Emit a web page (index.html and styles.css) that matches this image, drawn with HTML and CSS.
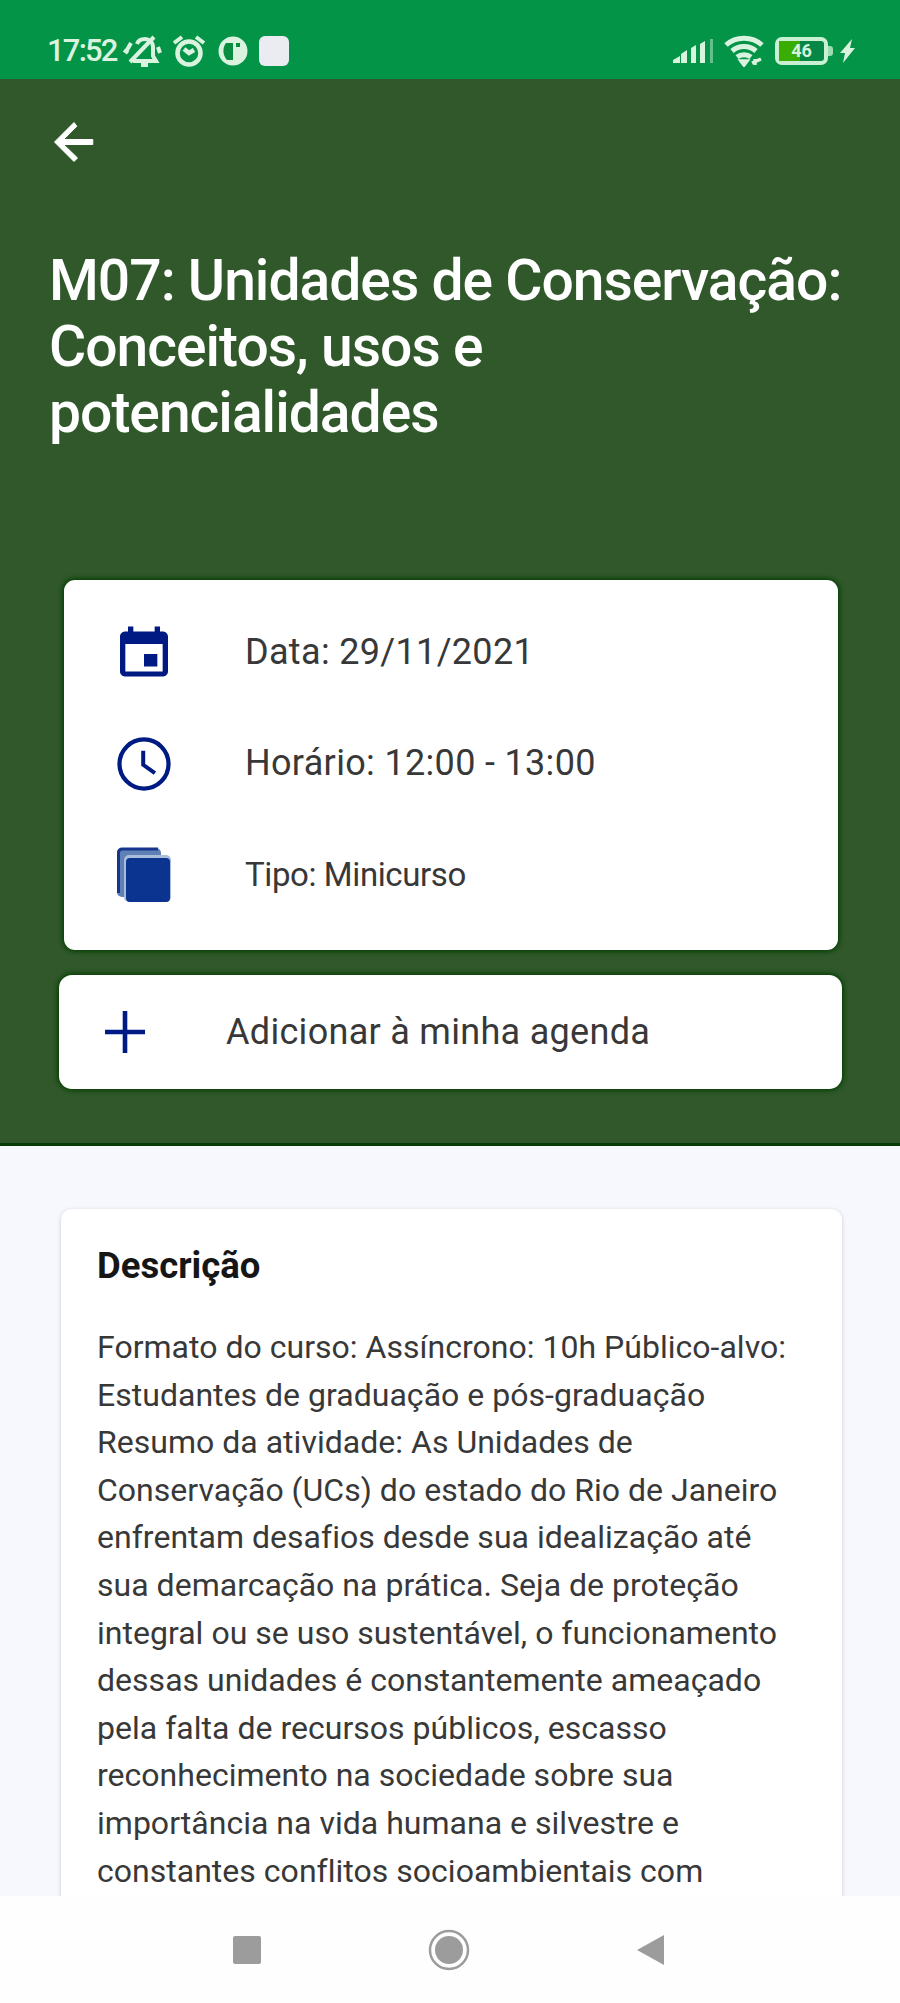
FILE: index.html
```html
<!DOCTYPE html>
<html lang="pt-BR">
<head>
  <meta charset="UTF-8">
  <meta name="viewport" content="width=device-width, initial-scale=1.0">
  <title>M07: Unidades de Conservação</title>
  <link rel="stylesheet" href="styles.css">
</head>
<body>
  <div class="status-bar">
    <span class="time">17:52</span>
    <svg class="bell" width="40" height="34" viewBox="0 0 40 34" fill="none" stroke="currentColor" stroke-width="4">
      <path d="M11 27h23l-3-5v-9c0-5-4-8-8-8-4 0-7 2-8 5M32 3L8 28M2 16l4 3M9 9l-4 7M36 13l2 6"/>
      <path d="M19 31h7"/>
    </svg>
    <svg class="alarm" width="34" height="32" viewBox="0 0 34 32" fill="none" stroke="currentColor">
      <circle cx="17" cy="18" r="11.5" stroke-width="4.500"/>
      <path d="M2 8l8-6M32 8l-8-6" stroke-width="4"/>
      <path d="M12 14l5 4 5-3" stroke-width="4.500"/>
    </svg>
    <svg class="disc" width="30" height="30" viewBox="0 0 30 30">
      <circle cx="15" cy="15" r="14.500" fill="currentColor"/>
      <path d="M8 7h7v17H9C5 20 4 12 8 7zM18 7h4v4h-4z" fill="#078c40"/>
    </svg>
    <span class="app-dot"></span>
    <svg class="signal" width="42" height="26" viewBox="0 0 42 26" fill="currentColor">
      <path d="M1 25v-3l7-4v7zM9 25V16l6-4v13zM19 25V10l5-3v18zM28 25V6l5-3v22z"/>
      <path d="M38 1h3v24h-3z" opacity=".45"/>
    </svg>
    <svg class="wifi" width="40" height="32" viewBox="0 0 40 32" fill="none" stroke="currentColor" stroke-width="5">
      <path d="M2 10C12 1 28 1 38 10M8 16c7-6 17-6 24 0M13 22c4-3 10-3 14 0"/>
      <path d="M17 26h6l-3 4zM28 28l9-4M31 24v6" stroke-width="3.500" fill="currentColor"/>
    </svg>
    <div class="battery"><div class="charge"></div><span>46</span></div>
    <svg class="bolt" width="16" height="24" viewBox="0 0 16 24" fill="currentColor">
      <path d="M12 0L0 14h5L3 24 15 9h-5z"/>
    </svg>
  </div>

  <header class="header">
    <svg class="back" width="60" height="60" viewBox="0 0 24 24" fill="#fff" stroke="#fff" stroke-width=".4">
      <path d="M19.500 11H7.830l5.300-5.300L12 4.200l-7.800 7.800 7.800 7.800 1.410-1.410L7.830 13H19.500v-2z"/>
    </svg>
    <h1>M07: Unidades de Conservação: Conceitos, usos e potencialidades</h1>

    <div class="info-card">
      <div class="info-row">
        <svg class="calendar" width="64" height="60" viewBox="0 0 24 24" preserveAspectRatio="none" fill="#001a83">
          <path d="M17 12h-5v5h5v-5zM16 1v2H8V1H6v2H5c-1.110 0-1.990.9-1.990 2L3 19c0 1.100.89 2 2 2h14c1.100 0 2-.9 2-2V5c0-1.100-.9-2-2-2h-1V1h-2zm3 18H5V8h14v11z"/>
        </svg>
        <span class="date">Data: 29/11/2021</span>
      </div>
      <div class="info-row">
        <svg width="64" height="64" viewBox="0 0 24 24" fill="none" stroke="#001a83">
          <circle cx="12" cy="12" r="9.200" stroke-width="1.600"/>
          <path d="M11.700 7v5.300l4.400 3.100" stroke-width="1.500"/>
        </svg>
        <span class="hour">Horário: 12:00 - 13:00</span>
      </div>
      <div class="info-row">
        <svg width="64" height="64" viewBox="0 0 64 64">
          <rect x="5" y="5" width="44" height="49" rx="5" fill="#5f80b5"/>
          <path d="M6.500 50V10q0-4 4-4H46" fill="none" stroke="#17358d" stroke-width="3"/>
          <rect x="12" y="12" width="47" height="47" rx="5" fill="#a9bddb"/>
          <rect x="14" y="15" width="44" height="44" rx="4" fill="#0a3490"/>
        </svg>
        <span class="kind">Tipo: Minicurso</span>
      </div>
    </div>

    <div class="add-card">
      <svg width="42" height="42" viewBox="0 0 42 42" stroke="#001a83" stroke-width="4.600">
        <path d="M1 21h40M21 0v42"/>
      </svg>
      <span>Adicionar à minha agenda</span>
    </div>
  </header>

  <main class="content">
    <section class="description">
      <h2>Descrição</h2>
      <p>Formato do curso: Assíncrono: 10h Público-alvo:<br>
        Estudantes de graduação e pós-graduação<br>
        Resumo da atividade: As Unidades de<br>
        Conservação (UCs) do estado do Rio de Janeiro<br>
        enfrentam desafios desde sua idealização até<br>
        sua demarcação na prática. Seja de proteção<br>
        integral ou se uso sustentável, o funcionamento<br>
        dessas unidades é constantemente ameaçado<br>
        pela falta de recursos públicos, escasso<br>
        reconhecimento na sociedade sobre sua<br>
        importância na vida humana e silvestre e<br>
        constantes conflitos socioambientais com</p>
    </section>
  </main>

  <nav class="nav-bar">
    <svg width="30" height="30" viewBox="0 0 30 30"><rect x="1" y="1" width="28" height="28" rx="2" fill="#9c9c9c"/></svg>
    <svg width="44" height="44" viewBox="0 0 44 44">
      <circle cx="22" cy="22" r="19" fill="none" stroke="#9c9c9c" stroke-width="2.500"/>
      <circle cx="22" cy="22" r="14" fill="#9c9c9c"/>
    </svg>
    <svg width="30" height="32" viewBox="0 0 30 32"><path d="M1 16L28 1v30z" fill="#9c9c9c"/></svg>
  </nav>
</body>
</html>
```
FILE: styles.css
```css
* { box-sizing: border-box; }
body {
  margin: 0;
  width: 900px;
  height: 2003px;
  display: flex;
  flex-direction: column;
  overflow: hidden;
  font-family: Roboto, sans-serif;
  background: #f7f8fd;
  color: #383838;
}
svg {
  display: block;
  flex: none;
}

/* status bar */
.status-bar {
  flex: none;
  height: 79px;
  padding: 22px 44px 0 47px;
  display: flex;
  align-items: center;
  background: #049447;
  color: #d9f3df;
}
.time {
  width: 75px;
  font-size: 31px;
  font-weight: 500;
  letter-spacing: -1.8px;
  white-space: nowrap;
}
.alarm { margin-left: 10px; }
.disc { margin-left: 12px; }
.app-dot {
  width: 30px;
  height: 30px;
  margin-left: 11px;
  border-radius: 6px;
  background: #ebebf2;
}
.signal { margin-left: auto; }
.wifi { margin-left: 10px; }
.battery {
  position: relative;
  width: 53px;
  height: 28px;
  margin: 0 12px 0 11px;
  border: 4px solid #c9f0d3;
  border-radius: 7px;
  background: #078746;
  color: #d5f5dc;
  font-size: 18px;
  font-weight: 700;
  line-height: 20px;
  text-align: center;
}
.battery::after {
  content: "";
  position: absolute;
  right: -9px;
  top: 5px;
  width: 5px;
  height: 10px;
  border-radius: 0 3px 3px 0;
  background: #9bdcb0;
}
.battery span { position: relative; }
.charge {
  position: absolute;
  left: 0;
  top: 0;
  width: 46%;
  height: 100%;
  background: #39ad04;
}

/* green header */
.header {
  flex: none;
  height: 1067px;
  padding: 33px 57px 0 49px;
  background: #30582b;
  border-bottom: 3px solid #063d05;
}
.back { margin-left: -5px; }
h1 {
  margin: 76px -20px 0 0;
  width: 810px;
  color: #fff;
  font-size: 57px;
  font-weight: 500;
  line-height: 66px;
  letter-spacing: -1px;
}
.info-card {
  height: 370px;
  margin: 134px 5px 0 15px;
  padding: 17px 0;
  border-radius: 11px;
  background: #fff;
  box-shadow: 0 0 4px 2px #0a4207;
}
.info-row {
  height: 111px;
  padding-left: 48px;
  display: flex;
  align-items: center;
}
.calendar { margin-top: 3px; }
.info-row span {
  margin: 0 0 2px 69px;
  font-size: 36px;
  letter-spacing: 0.33px;
  white-space: nowrap;
}
.info-row .kind {
  margin-bottom: 0;
  font-size: 33px;
  letter-spacing: -0.4px;
}
.add-card {
  width: 783px;
  height: 114px;
  margin: 25px 0 0 10px;
  padding-left: 45px;
  display: flex;
  align-items: center;
  border-radius: 13px;
  background: #fff;
  box-shadow: 0 0 4px 2px #0a4207;
}
.add-card span {
  margin-left: 80px;
  font-size: 36px;
  letter-spacing: 0.3px;
  white-space: nowrap;
}

/* description */
.content {
  flex: 1;
  min-height: 0;
  padding: 63px 58px 0 61px;
  overflow: hidden;
}
.description {
  height: 720px;
  padding: 35px 36px;
  border-radius: 11px 11px 0 0;
  background: #fff;
  box-shadow: 0 1px 4px rgba(0, 0, 0, 0.18);
}
h2 {
  margin: 0 0 36px;
  color: #161616;
  font-size: 36.5px;
  font-weight: 700;
  line-height: 44px;
}
.description p {
  margin: 0;
  font-size: 32px;
  line-height: 47.6px;
  letter-spacing: 0.02px;
  white-space: nowrap;
}

/* android buttons */
.nav-bar {
  flex: none;
  height: 107px;
  padding: 0 234px 0 232px;
  display: flex;
  align-items: center;
  justify-content: space-between;
  background: #fefefe;
}
```
